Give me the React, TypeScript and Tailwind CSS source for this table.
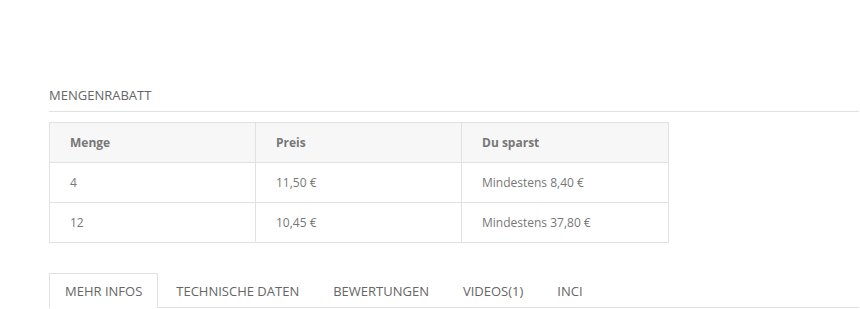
import React from "react";

const rows = [
  ["4", "11,50 €", "Mindestens 8,40 €"],
  ["12", "10,45 €", "Mindestens 37,80 €"],
];

const tabs = ["MEHR INFOS", "TECHNISCHE DATEN", "BEWERTUNGEN", "VIDEOS(1)", "INCI"];

export default function App() {
  return (
    <div
      className="w-[860px] h-[309px] overflow-hidden bg-white pl-[49px] pr-px pt-[87px] text-[#777]"
      style={{ fontFamily: '"Open Sans", sans-serif' }}
    >
      <div className="border-b border-[#e1e1e1] pb-[7px] text-[13px] leading-[17px] text-[#666]">
        MENGENRABATT
      </div>
      <table className="mt-[10px] w-[619px] border-collapse text-[12px] table-fixed">
        <colgroup>
          <col className="w-[206px]" />
          <col className="w-[206px]" />
          <col className="w-[207px]" />
        </colgroup>
        <thead>
          <tr className="bg-[#f7f7f7]">
            {["Menge", "Preis", "Du sparst"].map((h) => (
              <th
                key={h}
                className="h-[40px] border border-[#e1e1e1] pl-[20px] text-left font-bold text-[#777]"
              >
                {h}
              </th>
            ))}
          </tr>
        </thead>
        <tbody>
          {rows.map((r, i) => (
            <tr key={i}>
              {r.map((c, j) => (
                <td key={j} className="h-[40px] border border-[#e1e1e1] pl-[20px]">
                  {c}
                </td>
              ))}
            </tr>
          ))}
        </tbody>
      </table>
      <div className="mt-[30px] flex border-b border-[#e1e1e1] text-[13px] text-[#666]">
        {tabs.map((t, i) => (
          <div
            key={t}
            className={
              "mr-[2px] -mb-px h-[35px] px-[15px] leading-[35px] border-t border-l border-r " +
              (i === 0 ? "border-[#e1e1e1] bg-white" : "border-transparent")
            }
          >
            {t}
          </div>
        ))}
      </div>
    </div>
  );
}
